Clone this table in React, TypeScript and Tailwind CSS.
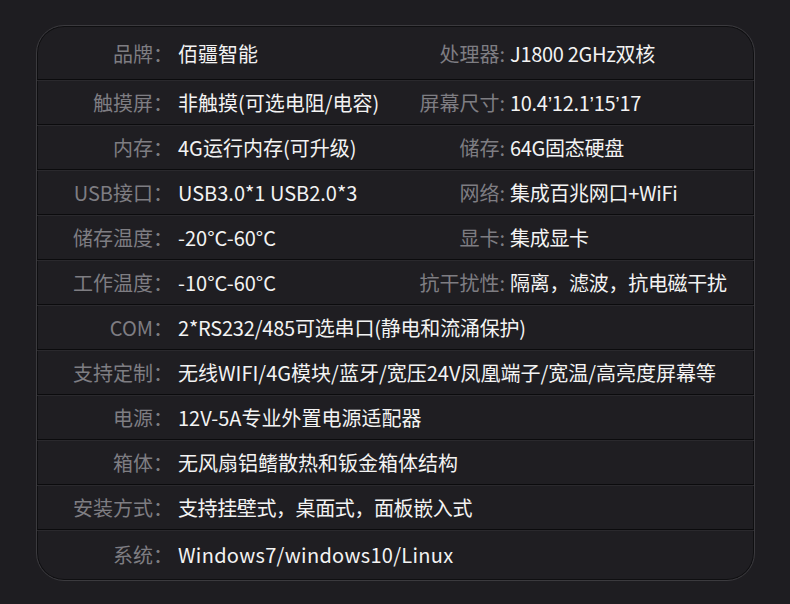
import type { ReactNode } from 'react'

const q = <span style={{ fontFamily: '"Liberation Sans", sans-serif' }}>’</span>

const pairs: [string, ReactNode, string, ReactNode][] = [
  ['品牌：', '佰疆智能', '处理器:', 'J1800 2GHz双核'],
  ['触摸屏：', '非触摸(可选电阻/电容)', '屏幕尺寸:', <>10.4{q}12.1{q}15{q}17</>],
  ['内存：', '4G运行内存(可升级)', '储存:', '64G固态硬盘'],
  ['USB接口：', 'USB3.0*1 USB2.0*3', '网络:', '集成百兆网口+WiFi'],
  ['储存温度：', '-20°C-60°C', '显卡:', '集成显卡'],
  ['工作温度：', '-10°C-60°C', '抗干扰性:', '隔离，滤波，抗电磁干扰'],
]

const singles: [string, string, string][] = [
  ['COM：', '2*RS232/485可选串口(静电和流涌保护)', 'tracking-[-0.2px]'],
  ['支持定制：', '无线WIFI/4G模块/蓝牙/宽压24V凤凰端子/宽温/高亮度屏幕等', ''],
  ['电源：', '12V-5A专业外置电源适配器', ''],
  ['箱体：', '无风扇铝鳍散热和钣金箱体结构', ''],
  ['安装方式：', '支持挂壁式，桌面式，面板嵌入式', 'tracking-[-0.4px]'],
  ['系统：', 'Windows7/windows10/Linux', 'tracking-[0.3px]'],
]

const divider = 'border-b border-[#0b0b0d] shadow-[0_1px_0_#2a292d]'

function Label({ text }: { text: string }) {
  return <span className="w-[136px] shrink-0 text-right text-[#7e7d82]">{text}</span>
}

export default function App() {
  return (
    <div
      className="w-[790px] h-[604px] bg-[#1e1d21] pt-[25px] pl-[36px] text-[20px] leading-none"
      style={{ fontFamily: '"Noto Sans CJK SC", "Noto Sans", sans-serif' }}
    >
      <div className="w-[719px] h-[556px] rounded-[28px] border border-[#3b3a3e] bg-[#1f1e22] shadow-[inset_0_0_0_1px_#0f0f11] overflow-hidden">
        {pairs.map((p, i) => (
          <div
            key={i}
            className={`flex items-center ${i === 0 ? 'h-[54px] pt-[3px]' : 'h-[45px] pt-[2px]'} ${divider}`}
          >
            <div className="flex w-[358px]">
              <Label text={p[0]} />
              <span className="ml-[5px] text-[#f3f3f3] whitespace-nowrap">{p[1]}</span>
            </div>
            <div className="flex">
              <span className="w-[110px] shrink-0 text-right text-[#7e7d82]">{p[2]}</span>
              <span className="ml-[5px] text-[#f3f3f3] whitespace-nowrap tracking-[-0.3px]">{p[3]}</span>
            </div>
          </div>
        ))}
        {singles.map((s, i) => (
          <div
            key={i}
            className={`flex items-center ${i === singles.length - 1 ? 'h-[48px] pt-[1px]' : `h-[45px] pt-[2px] ${divider}`}`}
          >
            <Label text={s[0]} />
            <span className={`ml-[5px] text-[#f3f3f3] whitespace-nowrap ${s[2]}`}>{s[1]}</span>
          </div>
        ))}
      </div>
    </div>
  )
}
